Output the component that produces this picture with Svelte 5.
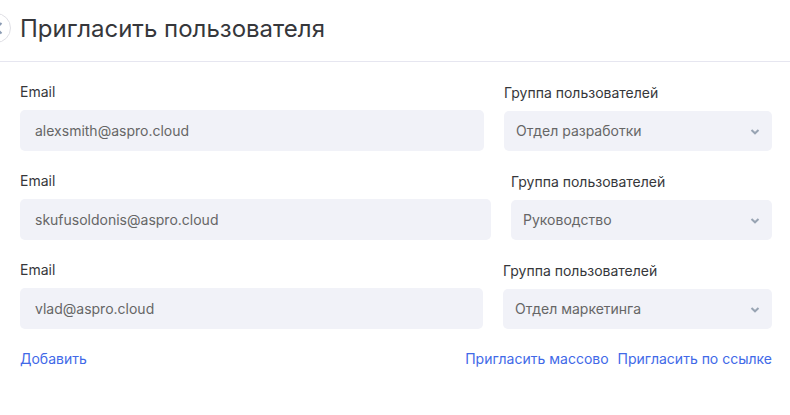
<script>
  const groups = ['Отдел разработки', 'Руководство', 'Отдел маркетинга'];
  let rows = $state([
    { email: 'alexsmith@aspro.cloud', group: 'Отдел разработки', width: 268 },
    { email: 'skufusoldonis@aspro.cloud', group: 'Руководство', width: 261 },
    { email: 'vlad@aspro.cloud', group: 'Отдел маркетинга', width: 269 }
  ]);

  function add(event) {
    event.preventDefault();
    rows.push({ email: '', group: groups[0], width: 268 });
  }
</script>

<div class="panel">
  <header>
    <button class="close" aria-label="Закрыть">
      <svg viewBox="0 0 30 30" width="30" height="30" aria-hidden="true">
        <path d="M10 10l10.5 10.5M20.5 10l-10.5 10.5" />
      </svg>
    </button>
    <h1>Пригласить пользователя</h1>
  </header>

  <form>
    {#each rows as row, i}
      <div class="row">
        <div class="field email">
          <label for="email-{i}">Email</label>
          <input id="email-{i}" type="email" bind:value={row.email} />
        </div>
        <div class="field group" style="width: {row.width}px">
          <label for="group-{i}">Группа пользователей</label>
          <div class="select">
            <select id="group-{i}" bind:value={row.group}>
              {#each groups as group}
                <option>{group}</option>
              {/each}
            </select>
            <svg viewBox="0 0 10 6" width="10" height="6" aria-hidden="true">
              <path d="M1.5 1L5 4.3L8.5 1" />
            </svg>
          </div>
        </div>
      </div>
    {/each}

    <nav>
      <a href="#add" onclick={add}>Добавить</a>
      <div class="links">
        <a href="#bulk">Пригласить массово</a>
        <a href="#link">Пригласить по ссылке</a>
      </div>
    </nav>
  </form>
</div>

<style>
  :global(body) {
    background: #fff;
    overflow-x: hidden;
  }
  .panel {
    font-family: Inter, 'Liberation Sans', sans-serif;
    font-size: 14px;
    line-height: 20px;
    font-optical-sizing: none;
    color: #36373b;
  }
  header {
    position: relative;
    padding: 13px 20px 16px;
    border-bottom: 1px solid #e6e6f0;
  }
  h1 {
    margin: 0;
    font-size: 24px;
    line-height: 32px;
    font-weight: 400;
  }
  .close {
    position: absolute;
    left: -19px;
    top: 13px;
    width: 30px;
    height: 30px;
    padding: 0;
    box-sizing: border-box;
    border: 1px solid #dfdfe5;
    border-radius: 50%;
    background: #fff;
  }
  .close svg {
    display: block;
    margin: -1px;
    fill: none;
    stroke: #8b9bb3;
    stroke-width: 2;
  }
  form {
    padding: 20px 18px 0 20px;
  }
  .row {
    display: flex;
    gap: 20px;
    margin-bottom: 20px;
  }
  .field {
    display: flex;
    flex-direction: column;
    gap: 8px;
  }
  .email {
    flex: 1;
    min-width: 0;
  }
  .group {
    flex: none;
    padding-top: 1px;
  }
  input,
  select {
    display: block;
    width: 100%;
    height: 41px;
    box-sizing: border-box;
    border: 0;
    border-radius: 5px;
    background: #f1f2f8;
    color: #666;
    font: inherit;
  }
  input {
    padding: 0 15px;
  }
  select {
    height: 40px;
    padding: 0 32px 0 12px;
    appearance: none;
  }
  .select {
    position: relative;
  }
  .select svg {
    position: absolute;
    right: 12px;
    top: 18px;
    fill: none;
    stroke: #98a4b3;
    stroke-width: 2;
    pointer-events: none;
  }
  nav {
    display: flex;
    justify-content: space-between;
  }
  .links {
    display: flex;
    gap: 9px;
  }
  a {
    color: #4169e8;
    text-decoration: none;
  }
</style>
